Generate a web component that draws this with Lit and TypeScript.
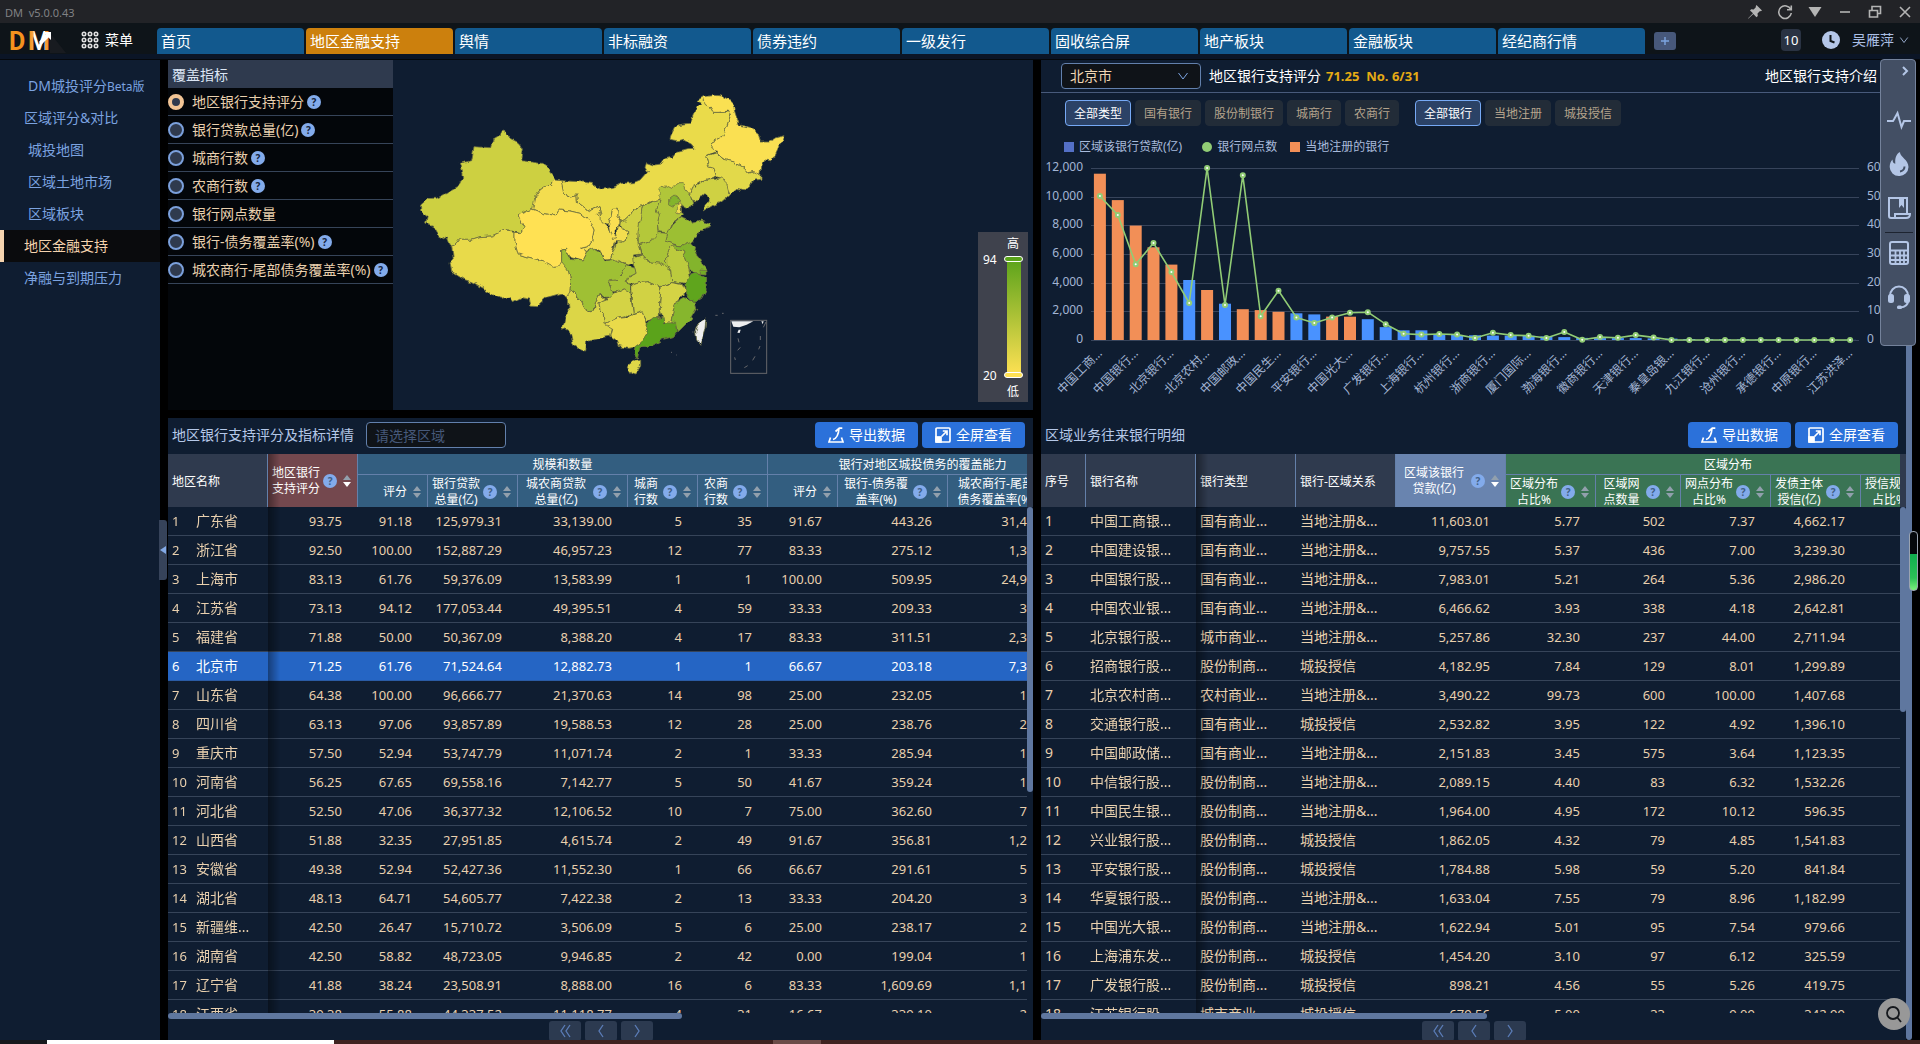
import { LitElement, html, svg, css, nothing } from "lit";
import { customElement } from "lit/decorators.js";
import { classMap } from "lit/directives/class-map.js";

const tabs = ["首页", "地区金融支持", "舆情", "非标融资", "债券违约", "一级发行", "固收综合屏", "地产板块", "金融板块", "经纪商行情"];

const indicators: [string, boolean][] = [
  ["地区银行支持评分", true],
  ["银行贷款总量(亿)", true],
  ["城商行数", true],
  ["农商行数", true],
  ["银行网点数量", false],
  ["银行-债务覆盖率(%)", true],
  ["城农商行-尾部债务覆盖率(%)", true],
];

// Province outlines on a 1920 x 1050 canvas: name, fill, points
const provinces: [string, string, string][] = [
  ["内蒙古", "#eadb4a", "483,302 540,305 575,310 610,327 640,322 665,310 700,308 720,300 742,275 735,262 740,248 760,255 780,252 800,238 815,235 830,217 860,209 885,208 878,190 855,178 830,182 810,178 812,168 828,135 870,130 880,105 895,80 905,70 890,62 910,50 918,70 930,80 940,97 975,97 992,95 990,110 980,140 965,170 930,190 945,205 945,215 918,228 925,260 942,265 950,290 925,300 905,305 875,325 868,345 850,340 830,330 800,335 790,350 780,358 750,365 728,378 700,392 690,410 675,424 660,420 650,410 652,385 641,385 636,410 625,430 600,425 592,410 604,395 600,380 565,395 532,368 530,345 500,350 490,335"],
  ["新疆", "#cdd041", "305,152 312,150 320,170 352,186 362,195 370,210 365,242 400,247 425,250 448,265 463,300 440,322 420,330 405,350 403,375 398,388 355,404 372,440 362,458 350,454 310,452 275,468 240,470 215,478 180,478 165,497 148,498 140,478 115,465 100,440 80,432 85,410 62,392 62,375 85,355 110,355 130,345 175,320 188,292 178,250 215,242 222,200 272,203 278,178 300,165"],
  ["西藏", "#e8da4a", "155,498 165,497 180,478 215,478 240,470 275,468 310,452 345,457 345,490 355,525 385,535 430,545 465,562 483,545 497,548 505,570 512,600 510,640 498,655 485,640 455,648 440,652 425,665 412,677 392,675 388,655 365,650 337,665 330,650 300,655 270,640 250,625 215,605 190,598 155,575 150,545 160,540"],
  ["甘肃", "#f3dd4f", "463,300 483,302 490,335 500,350 530,345 532,368 565,395 600,380 604,395 592,410 610,428 622,440 640,470 650,465 655,440 670,445 683,455 683,475 665,487 645,485 640,510 632,538 615,540 605,515 585,505 560,515 545,505 565,500 575,485 582,450 570,425 540,400 510,393 480,390 470,408 430,400 398,388 405,350 420,330 440,322"],
  ["青海", "#ffe153", "398,388 430,400 470,408 480,390 510,393 540,400 570,425 582,450 575,485 565,500 545,505 563,515 550,540 530,535 510,530 497,508 485,510 485,545 475,560 460,562 430,545 385,535 355,525 345,490 345,457 362,458 372,440 355,404"],
  ["黑龙江", "#fae052", "910,50 945,46 965,48 990,60 1002,85 1018,135 1050,142 1075,160 1080,183 1110,183 1125,175 1152,167 1140,195 1118,243 1095,240 1085,258 1083,283 1060,275 1040,280 1030,262 1000,245 975,240 955,225 940,205 930,190 965,170 980,140 992,105 985,93 960,97 940,97 930,80 915,70"],
  ["吉林", "#e2d94a", "918,228 950,218 970,238 1000,245 1030,262 1045,280 1065,275 1083,283 1083,298 1065,300 1055,312 1030,332 1010,328 990,345 980,320 970,298 950,290 942,265 925,260"],
  ["辽宁", "#cfd143", "875,325 880,310 885,322 915,302 945,297 965,290 980,310 988,345 965,365 940,375 912,393 915,375 928,360 920,348 905,347 890,365 880,365 868,345"],
  ["河北", "#b0c63a", "780,325 792,316 815,328 832,308 850,308 857,328 870,345 878,370 865,387 845,375 848,398 850,404 835,415 815,430 803,458 775,455 772,430 778,405 770,385 780,355"],
  ["北京", "#83b42c", "806,358 822,345 840,355 835,372 818,378 806,372"],
  ["天津", "#f0dc50", "835,365 845,377 848,398 830,398"],
  ["陕西", "#cfd143", "690,410 700,392 728,378 720,430 713,480 722,525 700,528 705,545 685,555 660,545 632,538 645,500 650,485 665,487 683,475 683,455 660,440 660,420 675,424"],
  ["山西", "#b4c83a", "728,378 760,362 780,358 770,385 778,405 772,430 775,470 755,480 715,495 714,460 720,420"],
  ["宁夏", "#fbdf52", "625,430 636,410 641,385 652,385 650,408 660,422 655,440 645,452 646,474 636,475 628,450"],
  ["山东", "#9cbf33", "803,460 815,435 840,412 865,420 875,433 890,428 905,420 930,428 932,438 900,452 890,470 870,490 850,498 820,492 797,483"],
  ["河南", "#a9c337", "715,495 755,480 775,458 803,460 797,483 820,492 830,500 808,510 800,530 800,550 812,568 800,568 780,550 745,545 725,525"],
  ["江苏", "#83b42c", "820,494 850,498 870,488 890,515 905,550 918,565 915,583 885,578 868,575 862,545 850,515 835,508"],
  ["安徽", "#bccb3d", "808,510 820,496 835,508 850,515 862,545 868,575 872,590 855,610 830,605 815,605 812,568 800,550 800,530"],
  ["上海", "#73ab26", "903,570 918,572 918,585 905,584"],
  ["湖北", "#bfcc3e", "698,535 725,525 745,545 780,550 812,570 815,603 780,620 745,605 715,608 692,615 682,605 685,592 708,580 700,550"],
  ["重庆", "#a6c236", "680,555 705,565 708,580 685,592 682,605 692,620 692,640 670,628 650,635 635,635 627,600 645,600 665,580"],
  ["四川", "#9fc034", "485,510 497,508 510,535 550,540 563,515 580,505 605,520 615,545 650,540 680,555 665,580 645,600 627,603 635,635 640,652 620,655 600,640 587,665 580,693 562,695 545,665 522,640 510,635 512,600 505,570 485,545"],
  ["云南", "#dcd647", "512,632 525,645 545,665 562,697 583,693 587,665 600,642 620,660 597,668 600,690 610,700 612,728 638,738 632,768 600,775 560,785 557,810 535,805 520,795 512,760 488,745 495,715 508,700 505,660 500,650"],
  ["贵州", "#d4d345", "597,668 620,660 640,640 670,626 692,640 695,665 700,700 675,710 655,715 635,725 612,730 610,700 600,690"],
  ["广西", "#e9da4a", "612,730 635,725 655,715 680,712 705,700 730,692 735,715 742,735 735,765 720,790 705,802 685,805 655,800 648,780 632,768 638,745"],
  ["湖南", "#d1d244", "695,615 715,608 745,605 778,620 782,640 778,680 778,712 760,718 740,728 730,692 700,700 697,660"],
  ["江西", "#d4d345", "780,620 815,605 845,610 857,635 835,660 820,690 813,728 800,732 785,714 778,690 782,640"],
  ["浙江", "#5fa51d", "872,585 890,578 920,595 918,630 905,655 885,667 870,655 855,635 855,610"],
  ["福建", "#86b62d", "830,665 857,650 885,667 890,685 870,720 835,755 830,735 813,728 820,690"],
  ["广东", "#5ba31b", "760,715 790,713 790,728 830,730 832,755 820,770 790,778 760,795 720,802 715,820 712,835 703,820 705,800 720,790 735,765 742,735"],
  ["海南", "#e0d748", "685,855 705,840 722,838 722,855 705,882 690,878 682,865"],
  ["台湾", "#eeeeee", "900,725 918,715 915,745 900,793 890,780 887,755"],
];

type Column = { label: string[]; width: number; help?: boolean; sort?: "none" | "down"; tone?: string; text?: boolean; edge?: boolean };

const regionColumns: Column[] = [
  { label: ["地区名称"], width: 100, text: true },
  { label: ["地区银行", "支持评分"], width: 90, help: true, sort: "down", tone: "red" },
  { label: ["评分"], width: 70, sort: "none", tone: "teal" },
  { label: ["银行贷款", "总量(亿)"], width: 90, help: true, sort: "none", tone: "teal" },
  { label: ["城农商贷款", "总量(亿)"], width: 110, help: true, sort: "none", tone: "teal" },
  { label: ["城商", "行数"], width: 70, help: true, sort: "none", tone: "teal" },
  { label: ["农商", "行数"], width: 70, help: true, sort: "none", tone: "teal" },
  { label: ["评分"], width: 70, sort: "none", tone: "teal" },
  { label: ["银行-债务覆", "盖率(%)"], width: 110, help: true, sort: "none", tone: "teal" },
  { label: ["城农商行-尾部", "债务覆盖率(%)"], width: 130, help: true, sort: "none", tone: "teal", edge: true },
];

const regionRows = `广东省|93.75|91.18|125,979.31|33,139.00|5|35|91.67|443.26|31,4
浙江省|92.50|100.00|152,887.29|46,957.23|12|77|83.33|275.12|1,3
上海市|83.13|61.76|59,376.09|13,583.99|1|1|100.00|509.95|24,9
江苏省|73.13|94.12|177,053.44|49,395.51|4|59|33.33|209.33|3
福建省|71.88|50.00|50,367.09|8,388.20|4|17|83.33|311.51|2,3
北京市|71.25|61.76|71,524.64|12,882.73|1|1|66.67|203.18|7,3
山东省|64.38|100.00|96,666.77|21,370.63|14|98|25.00|232.05|1
四川省|63.13|97.06|93,857.89|19,588.53|12|28|25.00|238.76|2
重庆市|57.50|52.94|53,747.79|11,071.74|2|1|33.33|285.94|1
河南省|56.25|67.65|69,558.16|7,142.77|5|50|41.67|359.24|1
河北省|52.50|47.06|36,377.32|12,106.52|10|7|75.00|362.60|7
山西省|51.88|32.35|27,951.85|4,615.74|2|49|91.67|356.81|1,2
安徽省|49.38|52.94|52,427.36|11,552.30|1|66|66.67|291.61|5
湖北省|48.13|64.71|54,605.77|7,422.38|2|13|33.33|204.20|3
新疆维...|42.50|26.47|15,710.72|3,506.09|5|6|25.00|238.17|2
湖南省|42.50|58.82|48,723.05|9,946.85|2|42|0.00|199.04|1
辽宁省|41.88|38.24|23,508.91|8,888.00|16|6|83.33|1,609.69|1,1
江西省|39.38|55.88|44,337.52|11,118.77|4|31|16.67|339.10|2`.split("\n").map((r) => r.split("|"));

const bankColumns: Column[] = [
  { label: ["序号"], width: 45, text: true },
  { label: ["银行名称"], width: 110, text: true },
  { label: ["银行类型"], width: 100, text: true },
  { label: ["银行-区域关系"], width: 100, text: true },
  { label: ["区域该银行", "贷款(亿)"], width: 110, help: true, sort: "down", tone: "slate" },
  { label: ["区域分布", "占比%"], width: 90, help: true, sort: "none", tone: "green" },
  { label: ["区域网", "点数量"], width: 85, help: true, sort: "none", tone: "green" },
  { label: ["网点分布", "占比%"], width: 90, help: true, sort: "none", tone: "green" },
  { label: ["发债主体", "授信(亿)"], width: 90, help: true, sort: "none", tone: "green" },
  { label: ["授信规模", "占比%"], width: 90, help: true, sort: "none", tone: "green" },
];

const L = "当地注册&...";
const C = "城投授信";
const G = "国有商业...";
const S = "股份制商...";
const bankRows: string[][] = [
  ["中国工商银...", G, L, "11,603.01", "5.77", "502", "7.37", "4,662.17"],
  ["中国建设银...", G, L, "9,757.55", "5.37", "436", "7.00", "3,239.30"],
  ["中国银行股...", G, L, "7,983.01", "5.21", "264", "5.36", "2,986.20"],
  ["中国农业银...", G, L, "6,466.62", "3.93", "338", "4.18", "2,642.81"],
  ["北京银行股...", "城市商业...", L, "5,257.86", "32.30", "237", "44.00", "2,711.94"],
  ["招商银行股...", S, C, "4,182.95", "7.84", "129", "8.01", "1,299.89"],
  ["北京农村商...", "农村商业...", L, "3,490.22", "99.73", "600", "100.00", "1,407.68"],
  ["交通银行股...", G, C, "2,532.82", "3.95", "122", "4.92", "1,396.10"],
  ["中国邮政储...", G, L, "2,151.83", "3.45", "575", "3.64", "1,123.35"],
  ["中信银行股...", S, L, "2,089.15", "4.40", "83", "6.32", "1,532.26"],
  ["中国民生银...", S, L, "1,964.00", "4.95", "172", "10.12", "596.35"],
  ["兴业银行股...", S, C, "1,862.05", "4.32", "79", "4.85", "1,541.83"],
  ["平安银行股...", S, C, "1,784.88", "5.98", "59", "5.20", "841.84"],
  ["华夏银行股...", S, L, "1,633.04", "7.55", "79", "8.96", "1,182.99"],
  ["中国光大银...", S, L, "1,622.94", "5.01", "95", "7.54", "979.66"],
  ["上海浦东发...", S, C, "1,454.20", "3.10", "97", "6.12", "325.59"],
  ["广发银行股...", S, C, "898.21", "4.56", "55", "5.26", "419.75"],
  ["江苏银行股...", "城市商业...", C, "679.56", "5.00", "33", "9.09", "342.99"],
].map((r, i) => [String(i + 1), ...r, ""]);

const loans = [11603, 9758, 7983, 6467, 5258, 4183, 3490, 2533, 2152, 2089, 1964, 1862, 1785, 1633, 1623, 1454, 898, 680, 674, 360, 350, 330, 310, 300, 290, 250, 200, 150, 130, 130, 130, 110, 100, 60, 50, 40, 40, 30, 30, 20, 20, 10, 10];
const branches = [502, 436, 264, 338, 237, 129, 600, 122, 575, 83, 172, 79, 59, 79, 95, 97, 55, 22, 19, 21, 19, 7, 25, 17, 15, 7, 28, 1, 10, 8, 17, 9, 0, 0, 0, 0, 0, 0, 0, 0, 0, 0, 0];
const localBanks = new Set([0, 1, 2, 3, 4, 6, 8, 9, 10, 13, 14]);
const axisNames = ["中国工商...", "中国银行...", "北京银行...", "北京农村...", "中国邮政...", "中国民生...", "平安银行...", "中国光大...", "广发银行...", "上海银行...", "杭州银行...", "浙商银行...", "厦门国际...", "渤海银行...", "徽商银行...", "天津银行...", "秦皇岛银...", "九江银行...", "沧州银行...", "承德银行...", "中原银行...", "江苏洪泽..."];

const chevronDown = html`<svg class="chev" viewBox="0 0 12 12" aria-hidden="true"><path d="M1.5 3 6 9l4.500-6" /></svg>`;
const exportIcon = html`<svg class="bicon" viewBox="0 0 16 16" aria-hidden="true"><path d="M2.500 10.500 1 15h14l-1.500-4.500M5 12.500c3.500-1 5.500-4.500 6-11M7.500 4.500 11.300 1.200h3" /></svg>`;
const fullIcon = html`<svg class="bicon" viewBox="0 0 16 16" aria-hidden="true"><rect x="1" y="1" width="14" height="14" rx="1" /><path d="M6.500 9.500 12 4M7.800 4H12v4.200" /><rect class="solid" x="1" y="10" width="5" height="5" /></svg>`;
const help = html`<span class="help">?</span>`;

@customElement("app-root")
export class AppRoot extends LitElement {
  static styles = css`
    :host {
      display: block;
      font: 14px/20px "Noto Sans", "Noto Sans CJK SC", sans-serif;
      color: #e9d0ae;
      background: #000;
    }
    * { box-sizing: border-box; }
    a { color: inherit; text-decoration: none; }
    button, input, select { font: inherit; color: inherit; margin: 0; padding: 0; border: 0; background: none; }
    svg { display: block; fill: none; }
    .page { display: flex; flex-direction: column; height: 100vh; overflow: hidden; }

    .titlebar { display: flex; align-items: center; height: 23px; padding-left: 5px; background: #222327; color: #808184; font-size: 11px; flex: none; }
    .titlebar .name { flex: 1; padding-top: 3px; white-space: pre; }
    .titlebar button { width: 30px; height: 23px; display: grid; place-items: center; }
    .titlebar svg { width: 16px; height: 16px; stroke: #b4b4b4; stroke-width: 1.6; }
    .titlebar .fill { fill: #b4b4b4; stroke: none; }

    .header { display: flex; align-items: flex-start; height: 37px; padding-top: 5px; flex: none; border-bottom: 1px solid #05080c; background: linear-gradient(#0e1419 31px, #0b1526 31px); }
    .logo { width: 72px; height: 28px; flex: none; }
    .logo text { font: 700 25px Roboto, sans-serif; }
    .menu { display: flex; gap: 6px; align-items: center; width: 85px; height: 24px; padding-left: 9px; color: #fff; }
    .menu svg { width: 18px; height: 18px; stroke: #e2e2e2; stroke-width: 1.6; }
    .tabs { display: flex; gap: 2px; flex: 0 1 1488px; min-width: 0; }
    .tabs a { flex: 1 1 0; min-width: 0; height: 26px; padding: 0 4px; border-radius: 4px 4px 0 0; background: #12598e; color: #fff; font-size: 15px; line-height: 26px; white-space: nowrap; overflow: hidden; }
    .tabs a.on { background: #cc800d; }
    .plus { width: 22px; height: 18px; margin: 4px 0 0 9px; border-radius: 3px; background: #47587a; display: grid; place-items: center; }
    .plus svg { width: 10px; height: 10px; stroke: #7da5e0; stroke-width: 1.4; }
    .account { margin-left: auto; display: flex; align-items: center; height: 24px; padding-right: 11px; color: #aabfe4; }
    .badge { width: 20px; height: 22px; border-radius: 4px; background: #2a3343; color: #fff; font-size: 13px; text-align: center; line-height: 22px; }
    .clock { width: 18px; height: 18px; margin: 0 12px 0 21px; }
    .account .chev { width: 10px; height: 10px; margin-left: 5px; stroke: #aabfe4; }

    .main { position: relative; display: flex; flex: 1; min-height: 0; }
    .side { width: 160px; flex: none; padding-top: 10px; background: #0f1d31; color: #7ba3e0; }
    .side a { display: block; height: 32px; padding-left: 28px; line-height: 32px; white-space: nowrap; }
    .side a.out { padding-left: 24px; }
    .side a.on { padding-left: 20px; border-left: 4px solid #f5d3ae; background: #0a0b0d; color: #f5d3ae; }
    .side small { font-size: 12px; }
    .content { flex: 1; min-width: 0; display: grid; grid-template-columns: minmax(0, 1fr) minmax(0, 1fr); gap: 8px; margin-left: 8px; }
    .pagebar { width: 6px; margin-right: 8px; flex: none; border-radius: 3px; background: #5f779f; }
    .collapse { position: absolute; left: 159px; top: 460px; width: 8px; height: 60px; border-radius: 0 3px 3px 0; background: #36435a; display: grid; place-items: center; }
    .collapse svg { width: 6px; height: 8px; fill: #82a9e6; }

    .half { display: flex; flex-direction: column; min-height: 0; min-width: 0; }
    .top { display: flex; height: 350px; flex: none; background: #0f1d31; }
    .left .top { margin-bottom: 8px; }
    .right { background: #0f1d31; }
    .right .top { display: block; height: 358px; }
    .picker { width: 225px; flex: none; background: #03060a; }
    .picker h2 { margin: 0; height: 28px; padding-left: 4px; background: #2f3a4e; color: #dce6f5; font: inherit; line-height: 30px; }
    .picker label { display: flex; align-items: center; height: 28px; border-bottom: 1px solid #364459; white-space: nowrap; }
    .picker input { appearance: none; flex: none; width: 16px; height: 16px; margin-right: 8px; border-radius: 50%; border: 2px solid #7ba0dc; background: #2f3a4e; }
    .picker input:checked { border: 4px solid #f2c596; }
    .picker .help { margin-left: 3px; }
    .help { display: inline-block; flex: none; width: 14px; height: 14px; border-radius: 50%; background: #83abeb; color: #14233c; font-size: 10px; line-height: 14px; font-weight: 700; text-align: center; }

    .mapbox { position: relative; flex: 1; min-width: 0; }
    .map { width: 100%; height: 100%; }
    .land { stroke: #6d7040; stroke-width: 2.4; stroke-linejoin: round; }
    .scale { position: absolute; right: 5px; bottom: 8px; width: 50px; height: 170px; background: #3f424d; }
    .scale text { fill: #fff; font-size: 12px; }

    .pickrow { display: flex; align-items: center; height: 33px; padding-left: 20px; border-bottom: 1px solid #485a7b; color: #fff; }
    .sel { position: relative; width: 140px; margin-right: 8px; }
    .sel select { appearance: none; width: 100%; height: 26px; padding-left: 8px; border: 1px solid #6280ac; border-radius: 4px; background: #0f1318; color: #f0d6b4; }
    .sel .chev { position: absolute; right: 12px; top: 7px; width: 12px; height: 12px; stroke: #7ba3e0; pointer-events: none; }
    .gold { margin-left: 5px; color: #e6ab14; font-size: 13px; font-weight: 700; white-space: pre; }
    .intro { margin-left: auto; padding-right: 29px; }
    .filters { display: flex; gap: 4px; padding: 7px 24px 0; font-size: 12px; }
    .filters button { height: 26px; padding: 1px 8px 0; border: 1px solid #222c38; border-radius: 4px; background: #222c38; color: #b5a48d; white-space: nowrap; }
    .filters button.on { border-color: #76a9f5; background: #2b4266; color: #fff; }
    .filters .gap { margin-left: 12px; }
    .legend { display: flex; height: 32px; padding: 10px 23px 0; font-size: 12px; line-height: 22px; color: #a9bbdc; }
    .legend span { display: flex; align-items: center; gap: 5px; margin-right: 13px; }
    .legend span:first-child { margin-right: 20px; }
    .legend i { width: 10px; height: 10px; background: #5470c6; }
    .legend .dot { border-radius: 50%; background: #91cc75; }
    .legend .org { background: #f28f57; }
    .chart { width: 100%; }
    .chart text { fill: #a3b5d4; font-size: 12px; }
    .grid { stroke: #37445b; }
    .blue { fill: #4992ff; }
    .orange { fill: #f28f57; }
    .line { stroke: #91cc75; stroke-width: 1.6; stroke-linejoin: round; }
    .pt { fill: #fff; stroke: #91cc75; stroke-width: 2; }

    .tablepanel { display: flex; flex-direction: column; flex: 1; min-height: 0; overflow: hidden; background: #0f1d31; color: #e9d0ae; }
    .tools { display: flex; align-items: center; gap: 4px; height: 36px; padding: 0 8px 2px 4px; flex: none; color: #b5c8e8; white-space: nowrap; }
    .tools input { width: 140px; height: 26px; margin-left: 8px; padding: 0 8px; border: 1px solid #6280ac; border-radius: 4px; background: #0f1318; }
    .tools input::placeholder { color: #46597a; opacity: 1; }
    .spacer { flex: 1; }
    .act { display: flex; align-items: center; gap: 5px; height: 26px; padding: 0 13px; border-radius: 4px; background: #2b71da; color: #fff; }
    .bicon { width: 16px; height: 16px; stroke: #fff; stroke-width: 1.7; }
    .solid { fill: #fff; }
    .tablebox { display: flex; flex: 1; min-height: 0; }
    .view { flex: 1; min-width: 0; overflow: hidden; }
    .vbar { width: 6px; flex: none; background: linear-gradient(#2f3a4e 53px, transparent 53px); padding-top: 53px; }
    .vbar div { height: 285px; border-radius: 3px; background: #5f779f; }
    .right .vbar div { height: 205px; }
    .hbar { height: 6px; flex: none; width: 514px; border-radius: 3px; background: #5f779f; }
    .right .hbar { width: 446px; }
    table { table-layout: fixed; border-collapse: separate; border-spacing: 0; }
    th { padding: 1px 0 0; height: 32px; border-right: 1px solid #6480aa; background: #2f3a4e; color: #fff; font-size: 12px; line-height: 16px; font-weight: 400; white-space: nowrap; }
    th.group { height: 21px; padding-top: 2px; border-bottom: 1px solid #6480aa; }
    th.text { padding: 2px 0 0 4px; text-align: left; }
    th.red { background: #74484e; }
    th.teal { background: #335e80; }
    th.green { background: #3a7454; }
    th.slate { background: #6984af; }
    .head { display: flex; align-items: center; height: 31px; padding: 0 6px 0 4px; }
    .head .label { flex: 1; text-align: center; }
    .head .label.end { text-align: right; }
    .head .help { margin-left: 3px; color: #3f6087; }
    .sort { width: 8px; height: 12px; margin-left: 6px; flex: none; }
    .sort svg { width: 8px; height: 12px; fill: #92a0ad; }
    .sort .act-arrow { fill: #fff; }
    td { height: 29px; padding: 0 16px 0 4px; border-bottom: 1px solid #364459; font-size: 13px; text-align: right; white-space: nowrap; }
    td.text { padding-right: 0; font-size: 14px; text-align: left; }
    td.edge { padding-right: 51px; }
    .frozen { position: sticky; left: 0; }
    .frozen::after { content: ""; position: absolute; left: 100%; top: 0; bottom: -1px; width: 12px; background: linear-gradient(90deg, rgba(0, 0, 0, 0.38), transparent); pointer-events: none; }
    th.frozen::after { margin-left: 1px; }
    .no { display: inline-block; width: 24px; font-size: 13px; }
    tr.on td { background: #2565c4; color: #fff; border-color: #2a5ba5; }
    .pager { display: flex; justify-content: center; gap: 4px; height: 21px; padding-top: 2px; flex: none; }
    .pager button { width: 32px; height: 20px; border-radius: 3px; background: #2c3a50; display: grid; place-items: center; }
    .pager svg { width: 14px; height: 14px; stroke: #5b7db8; stroke-width: 1.3; }

    .dock { position: absolute; right: 4px; top: -1px; width: 36px; height: 287px; border: 1px solid #74829b; border-radius: 4px; background: #434f64; color: #b4c6e6; display: flex; flex-direction: column; align-items: center; padding-left: 2px; }
    .dock button { width: 30px; height: 44px; display: grid; place-items: center; }
    .dock .more { height: 21px; margin-bottom: 17px; padding-left: 12px; }
    .dock svg { width: 24px; height: 24px; stroke: currentColor; stroke-width: 2; }
    .dock .more svg { width: 10px; height: 10px; }
    .dock hr { width: 28px; margin: 2px 0 -2px; border: 0; border-top: 1px solid #1d2430; }
    .f { fill: currentColor; stroke: none; }
    .cut { fill: none; stroke: #434f64; }
    .gauge { position: absolute; right: 2px; top: 471px; width: 9px; height: 60px; border: 1px solid #9aa3b0; border-radius: 4px; background: linear-gradient(#05080c 22px, #0fae4e 22px, #2cc157 46px, #7cf07c); }
    .find { position: absolute; right: 10px; bottom: 10px; width: 32px; height: 32px; border-radius: 50%; background: #989898; display: grid; place-items: center; }
    .find svg { width: 18px; height: 18px; stroke: #15181d; stroke-width: 1.8; }

    .strip { display: flex; height: 4px; flex: none; background: #3f2220; }
    .strip .a { width: 47px; background: #17181c; }
    .strip .b { width: 287px; background: #fff; }
    .strip .c { width: 48px; margin-left: 439px; background: #6b4b48; }
  `;

  private header(c: Column, rowspan: number, frozen: boolean) {
    const cls = classMap({ [c.tone ?? "plain"]: true, text: !!c.text, frozen });
    return html`<th class=${cls} rowspan=${rowspan}>${c.text
      ? c.label[0]
      : html`<div class="head">
          <span class="label ${c.label.length === 1 ? "end" : ""}">${c.label[0]}${c.label[1] ? html`<br />${c.label[1]}` : nothing}</span>
          ${c.help ? help : nothing}
          <button class="sort" aria-label="排序"><svg viewBox="0 0 8 12"><path d="M0 5 4 0l4 5z" /><path class=${c.sort === "down" ? "act-arrow" : ""} d="M0 7l4 5 4-5z" /></svg></button>
        </div>`}</th>`;
  }

  private table(columns: Column[], groups: [string, number, string][], rows: string[][], frozenCol: number, selected: number, numbered: boolean) {
    const grouped = groups.reduce((n, g) => n + g[1], 0);
    const single = columns.length - grouped;
    return html`<div class="tablebox">
      <div class="view">
        <table style="width:${columns.reduce((n, c) => n + c.width, 0)}px">
          <colgroup>${columns.map((c) => html`<col style="width:${c.width}px" />`)}</colgroup>
          <thead>
            <tr>
              ${columns.slice(0, single).map((c, i) => this.header(c, 2, i === frozenCol))}
              ${groups.map(([name, span, tone]) => html`<th class="group ${tone}" colspan=${span}>${name}</th>`)}
            </tr>
            <tr>${columns.slice(single).map((c) => this.header(c, 1, false))}</tr>
          </thead>
          <tbody>
            ${rows.map((r, n) => html`<tr class=${n === selected ? "on" : ""}>
              ${r.map((v, i) => html`<td class=${classMap({ text: !!columns[i].text, edge: !!columns[i].edge, frozen: i === frozenCol })}>${numbered && i === 0 ? html`<span class="no">${n + 1}</span>` : nothing}${v}</td>`)}
            </tr>`)}
          </tbody>
        </table>
      </div>
      <div class="vbar"><div></div></div>
    </div>
    <div class="hbar"></div>
    <div class="pager">
      <button aria-label="第一页"><svg viewBox="0 0 14 14"><path d="M7 1 3 7l4 6M12 1 8 7l4 6" /></svg></button>
      <button aria-label="上一页"><svg viewBox="0 0 14 14"><path d="M9 1 5 7l4 6" /></svg></button>
      <button aria-label="下一页"><svg viewBox="0 0 14 14"><path d="m5 1 4 6-4 6" /></svg></button>
    </div>`;
  }

  private map() {
    return html`<svg class="map" viewBox="-21 -60 1920 1050" role="img" aria-label="中国地图">
      <defs>
        <filter id="coast" x="-5%" y="-5%" width="110%" height="110%" color-interpolation-filters="sRGB">
          <feTurbulence type="fractalNoise" baseFrequency="0.045" numOctaves="2" seed="4" />
          <feDisplacementMap in="SourceGraphic" scale="18" xChannelSelector="R" yChannelSelector="G" />
        </filter>
      </defs>
      <g class="land" filter="url(#coast)">
        ${provinces.map(([, fill, points]) => svg`<polygon points=${points} fill=${fill} />`)}
      </g>
      <g stroke="#66676b" stroke-width="3">
        <rect x="992" y="721" width="108" height="159" />
        <path d="M994 724h66l-20 10-22 8-18-2z" fill="#eee" stroke="none" />
        <path d="M1084 724h7l-3 9zM1012 758l4-9h6l-3 10z" fill="#eee" stroke="none" />
        <path d="M1098 726l-8 16M1014 775l3 12M1021 802l-8 9M1004 832l2 8M1033 863l10-6M1058 841l7-12M1076 808l4-10M1081 780v-12M946 706h7M966 700h5M877 756h3M813 817h3M828 825h2" />
      </g>
    </svg>`;
  }

  private chart() {
    const step = 768 / 43;
    const x = (i: number) => Math.round((50 + step * (i + 0.5)) * 10) / 10;
    const y = (v: number) => Math.round((182 - (v / 12000) * 172) * 10) / 10;
    const ticks = [0, 1, 2, 3, 4, 5, 6];
    return html`<svg class="chart" viewBox="0 0 865 250" role="img" aria-label="银行贷款与网点数">
      ${ticks.map((t) => svg`
        <line class="grid" x1="50" x2="818" y1=${Math.round(y(t * 2000)) + 0.5} y2=${Math.round(y(t * 2000)) + 0.5} />
        <text x="42" y=${Math.round(y(t * 2000)) + 3} text-anchor="end">${(t * 2000).toLocaleString("en-US")}</text>
        <text x="826" y=${Math.round(y(t * 2000)) + 3}>${t * 100}</text>`)}
      ${loans.map((v, i) => svg`<rect class=${localBanks.has(i) ? "orange" : "blue"} x=${x(i) - 6} width="12" y=${y(v)} height=${182 - y(v)} />`)}
      <polyline class="line" points=${branches.map((v, i) => `${x(i)},${y(v * 20)}`).join(" ")} />
      ${branches.map((v, i) => svg`<circle class="pt" cx=${x(i)} cy=${y(v * 20)} r="2" />`)}
      ${axisNames.map((n, i) => svg`<text text-anchor="end" transform="translate(${x(i * 2) + 3} 196) rotate(-45)">${n}</text>`)}
    </svg>`;
  }

  private actions() {
    return html`<span class="spacer"></span>
      <button class="act">${exportIcon}导出数据</button>
      <button class="act">${fullIcon}全屏查看</button>`;
  }

  render() {
    return html`<div class="page">
      <div class="titlebar">
        <span class="name">DM  v5.0.0.43</span>
        <button aria-label="置顶"><svg viewBox="0 0 16 16"><path class="fill" d="M9.500 1 15 6.500l-1.200.8-.8-.3-2.500 2.500.3 2.500-1.300 1.200L6.300 10 1.500 14.500 1 14.800l.4-.7L6 9.200 3 6.500l1.200-1.300 2.500.3L9 3l-.3-.8z" /></svg></button>
        <button aria-label="刷新"><svg viewBox="0 0 16 16"><path d="M13.800 5.500A6.300 6.300 0 1 0 14.300 9M14.300 1.500v4.300H10" /></svg></button>
        <button aria-label="菜单"><svg viewBox="0 0 16 16"><path class="fill" d="M1.500 3h13L8 13z" /></svg></button>
        <button aria-label="最小化"><svg viewBox="0 0 16 16"><path d="M3 8h10" /></svg></button>
        <button aria-label="还原"><svg viewBox="0 0 16 16"><path d="M2.500 6.500h8v6.500h-8zM5 6V2.500h8.500v7H11" /></svg></button>
        <button aria-label="关闭"><svg viewBox="0 0 16 16"><path d="m3 3 10 10M13 3 3 13" /></svg></button>
      </div>
      <header class="header">
        <svg class="logo" viewBox="0 0 72 28" role="img" aria-label="DM">
          <defs>
            <linearGradient id="lg" x1="0" y1="0" x2="1" y2="0"><stop offset="0" stop-color="#f0880f" /><stop offset=".22" stop-color="#f8a544" /><stop offset=".3" stop-color="#fff" /><stop offset=".76" stop-color="#fff" /><stop offset=".8" stop-color="#f5a040" /><stop offset="1" stop-color="#f0880f" /></linearGradient>
          </defs>
          <path d="M50 5 66 25H50z" fill="#181b20" />
          <text x="9" y="22" fill="#f5921e">D</text>
          <text x="28" y="22" fill="url(#lg)">M</text>
          <path d="M43 4h8v8l-2.500-2.500-7 7-2.500-2.500 6.500-7.500z" fill="#fff" />
        </svg>
        <button class="menu"><svg viewBox="0 0 18 18">${[3, 9, 15].map((cy) => [3, 9, 15].map((cx) => svg`<circle cx=${cx} cy=${cy} r="1.700" />`))}</svg>菜单</button>
        <nav class="tabs">${tabs.map((t, i) => html`<a href="#" class=${i === 1 ? "on" : ""}>${t}</a>`)}</nav>
        <button class="plus" aria-label="新增"><svg viewBox="0 0 10 10"><path d="M5 1v8M1 5h8" /></svg></button>
        <div class="account">
          <span class="badge">10</span>
          <svg class="clock" viewBox="0 0 18 18"><circle cx="9" cy="9" r="9" fill="#b4c6e8" /><path d="M8.500 4v6l4 1.500" stroke="#0e1419" stroke-width="2" /></svg>
          吴雁萍${chevronDown}
        </div>
      </header>
      <div class="main">
        <nav class="side">
          <a href="#">DM城投评分<small>Beta版</small></a>
          <a href="#" class="out">区域评分&amp;对比</a>
          <a href="#">城投地图</a>
          <a href="#">区域土地市场</a>
          <a href="#">区域板块</a>
          <a href="#" class="on">地区金融支持</a>
          <a href="#" class="out">净融与到期压力</a>
        </nav>
        <div class="content">
          <section class="half left">
            <div class="top">
              <div class="picker">
                <h2>覆盖指标</h2>
                ${indicators.map(([name, tip], i) => html`<label><input type="radio" name="indicator" ?checked=${i === 0} />${name}${tip ? help : nothing}</label>`)}
              </div>
              <div class="mapbox">
                ${this.map()}
                <svg class="scale" viewBox="0 0 50 170">
                  <defs><linearGradient id="sc" x1="0" y1="0" x2="0" y2="1"><stop offset="0" stop-color="#5ba31b" /><stop offset="1" stop-color="#ffe153" /></linearGradient></defs>
                  <text x="29" y="16">高</text>
                  <text x="5" y="32">94</text>
                  <rect x="29" y="27" width="14" height="116" fill="url(#sc)" />
                  <rect x="26.500" y="24.500" width="18" height="5" rx="2.500" fill="#5ba31b" stroke="#fff" />
                  <rect x="26.500" y="140.500" width="18" height="5" rx="2.500" fill="#ffe153" stroke="#fff" />
                  <text x="5" y="148">20</text>
                  <text x="29" y="164">低</text>
                </svg>
              </div>
            </div>
            <div class="tablepanel">
              <div class="tools">
                <label for="region">地区银行支持评分及指标详情</label>
                <input id="region" type="text" placeholder="请选择区域" />
                ${this.actions()}
              </div>
              ${this.table(regionColumns, [["规模和数量", 5, "teal"], ["银行对地区城投债务的覆盖能力", 3, "teal"]], regionRows, 0, 5, true)}
            </div>
          </section>
          <section class="half right">
            <div class="top">
              <div class="pickrow">
                <div class="sel"><select aria-label="地区"><option>北京市</option></select>${chevronDown}</div>
                地区银行支持评分<span class="gold">71.25  No. 6/31</span>
                <a class="intro" href="#">地区银行支持介绍</a>
              </div>
              <div class="filters">
                <button class="on">全部类型</button><button>国有银行</button><button>股份制银行</button><button>城商行</button><button>农商行</button>
                <button class="on gap">全部银行</button><button>当地注册</button><button>城投授信</button>
              </div>
              <div class="legend">
                <span><i></i>区域该银行贷款(亿)</span><span><i class="dot"></i>银行网点数</span><span><i class="org"></i>当地注册的银行</span>
              </div>
              ${this.chart()}
            </div>
            <div class="tablepanel">
              <div class="tools"><span>区域业务往来银行明细</span>${this.actions()}</div>
              ${this.table(bankColumns, [["区域分布", 5, "green"]], bankRows, 1, -1, false)}
            </div>
          </section>
        </div>
        <div class="pagebar"></div>
        <button class="collapse" aria-label="收起"><svg viewBox="0 0 6 8"><path d="M6 0v8L0 4z" /></svg></button>
        <aside class="dock">
          <button class="more" aria-label="收起工具"><svg viewBox="0 0 10 10"><path d="m3 1 4 4-4 4" /></svg></button>
          <button aria-label="动态"><svg viewBox="0 0 24 24"><path d="M0 13h6l1.500-2.500L10.500 5l4 14 2.500-6h7" /></svg></button>
          <button aria-label="热点"><svg viewBox="0 0 24 24"><path class="f" d="M13 0c-.3 5 8.500 7.500 8.500 15A9.200 9.200 0 0 1 12 24a9.200 9.200 0 0 1-9.300-9c0-3.500 1-5.500 2.800-7.500.2 2.500.8 3.800 2.800 4.200C8 7 8.500 2.500 13 0z" /><path class="cut" d="M17.500 14.500a5 5 0 0 1-4.500 5" /></svg></button>
          <button aria-label="文档"><svg viewBox="0 0 24 24"><path d="M20 17V2H2v18q0 2 2 2h15c2.500 0 4-1.200 4-4H8v4" /><path class="f" d="M12 2h5v10l-2.500-3-2.500 3z" /></svg></button>
          <hr />
          <button aria-label="计算器"><svg viewBox="0 0 24 24"><rect x="3" y="1" width="18" height="22" rx="2" /><path d="M3 9.500h18M3 14.500h18M3 19h18M8.500 10v13M13 10v13M17 10v13" stroke-width="1.800" /></svg></button>
          <button aria-label="客服"><svg viewBox="0 0 24 24"><path d="M3 11a9 9.500 0 0 1 18 0M21 16c0 4-3 6-8 6.500" /><rect class="f" x="1" y="9" width="6" height="9" rx="2.500" /><rect class="f" x="17" y="9" width="6" height="9" rx="2.500" /><rect class="f" x="10" y="20.500" width="5" height="3.500" rx="1.500" /></svg></button>
        </aside>
        <div class="gauge"></div>
        <button class="find" aria-label="搜索"><svg viewBox="0 0 18 18"><circle cx="8" cy="8" r="6" /><path d="m12 12 4 5" /></svg></button>
      </div>
      <div class="strip"><span class="a"></span><span class="b"></span><span class="c"></span></div>
    </div>`;
  }
}
